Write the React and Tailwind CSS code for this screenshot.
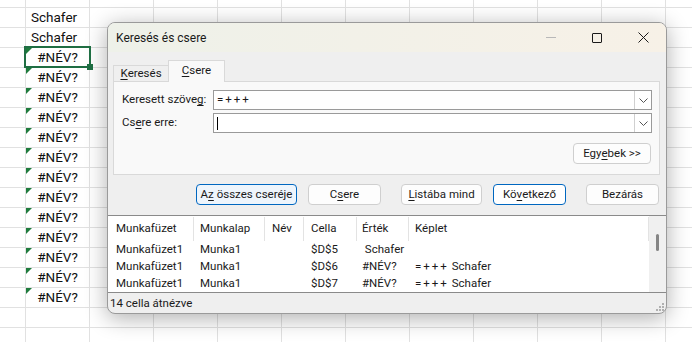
import React from "react";

const UI = { fontFamily: "Roboto, 'Noto Sans', sans-serif" };
const CELL = { fontFamily: "Roboto, 'Liberation Sans', sans-serif" };

function Chevron() {
  return (
    <svg width="9" height="5" viewBox="0 0 9 5" fill="none">
      <path d="M0.5 0.5 L4.5 4.5 L8.5 0.5" stroke="#555" strokeWidth="1" />
    </svg>
  );
}

function SheetRow({ h, children }) {
  return (
    <div className={`flex shrink-0 border-b border-[#e1e1e1] ${h}`}>
      <div className="w-[26px] shrink-0 border-r border-[#e1e1e1]" />
      <div className="relative w-[64px] shrink-0 border-r border-[#e1e1e1]">{children}</div>
      {Array.from({ length: 9 }).map((_, i) => (
        <div key={i} className="w-[64px] shrink-0 border-r border-[#e1e1e1]" />
      ))}
      <div className="flex-1" />
    </div>
  );
}

function ErrCell({ selected }) {
  return (
    <>
      <div className="absolute left-0 top-0 w-0 h-0 border-t-[6px] border-t-[#1e7b3c] border-r-[6px] border-r-transparent" />
      <div className="text-center text-[13.5px] leading-[19px] text-[#111]" style={CELL}>#NÉV?</div>
      {selected && (
        <>
          <div className="absolute -left-[2px] -top-[2px] w-[67px] h-[22px] border-2 border-[#1f6e43] z-10" />
          <div className="absolute left-[61px] top-[16px] w-[6px] h-[6px] bg-[#1f6e43] z-10" />
        </>
      )}
    </>
  );
}

function Btn({ w, children, variant }) {
  const base = "h-[21px] shrink-0 rounded-[4px] border flex items-center justify-center text-[11.5px] text-[#1a1a1a]";
  const v =
    variant === "focus"
      ? "border-[#0067c0] bg-[#eef5fc]"
      : variant === "default"
      ? "border-[#0067c0] bg-white"
      : "border-[#cfcfcf] bg-[#fdfdfd]";
  return <div className={`${base} ${v} ${w}`}>{children}</div>;
}

function U({ children }) {
  return <span className="underline underline-offset-[2px] decoration-1">{children}</span>;
}

function Plus() {
  return <span className="tracking-[2px]">=+++</span>;
}

export default function App() {
  const rows = [];
  rows.push(<SheetRow key="r0" h="h-[8px]" />);
  rows.push(
    <SheetRow key="r1" h="h-[20px]">
      <div className="pl-[5px] text-[13.5px] leading-[19px] text-[#111]" style={CELL}>Schafer</div>
    </SheetRow>
  );
  rows.push(
    <SheetRow key="r2" h="h-[20px]">
      <div className="pl-[5px] text-[13.5px] leading-[19px] text-[#111]" style={CELL}>Schafer</div>
    </SheetRow>
  );
  for (let i = 0; i < 13; i++) {
    rows.push(
      <SheetRow key={"e" + i} h="h-[20px]">
        <ErrCell selected={i === 0} />
      </SheetRow>
    );
  }
  rows.push(<SheetRow key="r16" h="h-[20px]" />);
  rows.push(<SheetRow key="r17" h="h-[20px]" />);

  const colW = ["w-[86px]", "w-[71px]", "w-[39px]", "w-[53px]", "w-[52px]", "w-[240px]"];
  const colPl = ["pl-[8px]", "pl-[6px]", "pl-[7px]", "pl-[7px]", "pl-[5px]", "pl-[6px]"];
  const headers = ["Munkafüzet", "Munkalap", "Név", "Cella", "Érték", "Képlet"];
  const formula = (
    <>
      <Plus /> Schafer
    </>
  );
  const data = [
    ["Munkafüzet1", "Munka1", "", "$D$5", "\u00a0Schafer", ""],
    ["Munkafüzet1", "Munka1", "", "$D$6", "#NÉV?", formula],
    ["Munkafüzet1", "Munka1", "", "$D$7", "#NÉV?", formula],
  ];

  return (
    <div className="relative w-[692px] h-[342px] overflow-hidden bg-white">
      <div className="flex flex-col">{rows}</div>

      {/* Dialog */}
      <div
        className="absolute left-[107px] top-[22px] w-[560px] h-[292px] rounded-[8px] border border-[#9a9a9a] bg-[#efefef] overflow-hidden flex flex-col shadow-[0_4px_22px_rgba(0,0,0,0.32)] text-[#1a1a1a]"
        style={UI}
      >
        {/* Title bar */}
        <div className="h-[29px] shrink-0 flex items-center bg-gradient-to-r from-[#eef1e9] to-[#f7f1e7]">
          <div className="pl-[8px] text-[12px] flex-1">Keresés és csere</div>
          <div className="w-[46px] h-full flex items-center justify-center">
            <div className="w-[10px] h-px bg-[#b8b8b8]" />
          </div>
          <div className="w-[46px] h-full flex items-center justify-center">
            <div className="w-[10px] h-[10px] border border-[#1a1a1a] rounded-[1px]" />
          </div>
          <div className="w-[46px] h-full flex items-center justify-center">
            <svg width="11" height="11" viewBox="0 0 11 11">
              <path d="M0.5 0.5 L10.5 10.5 M10.5 0.5 L0.5 10.5" stroke="#1a1a1a" strokeWidth="1" />
            </svg>
          </div>
        </div>

        {/* Tabs */}
        <div className="mt-[8px] ml-[5px] h-[21px] flex items-end shrink-0">
          <div className="w-[55px] h-[16px] border-t border-l border-[#d9d9d9] bg-[#efefef] flex items-center justify-center text-[11.5px]">
            <U>K</U>eresés
          </div>
          <div className="relative z-10 -mb-px w-[57px] h-[22px] border border-b-0 border-[#d9d9d9] bg-[#f9f9f9] flex items-center justify-center text-[11.5px] pb-[2px]">
            <U>C</U>sere
          </div>
        </div>

        {/* Panel */}
        <div className="ml-[5px] w-[547px] h-[94px] shrink-0 border border-[#d9d9d9] bg-[#f9f9f9] pt-[8px] flex flex-col text-[11.5px]">
          <div className="flex items-center h-[20px]">
            <div className="w-[99px] pl-[8px] shrink-0">
              Keresett szöve<U>g</U>:
            </div>
            <div className="w-[439px] h-[20px] border border-[#9a9a9a] bg-white flex items-center">
              <div className="flex-1 pl-[3px] text-[11.5px]">
                <Plus />
              </div>
              <div className="w-[17px] h-[18px] border-l border-[#d0d0d0] flex items-center justify-center bg-white">
                <Chevron />
              </div>
            </div>
          </div>
          <div className="flex items-center h-[20px] mt-[3px]">
            <div className="w-[99px] pl-[8px] shrink-0">
              Cs<U>e</U>re erre:
            </div>
            <div className="w-[439px] h-[20px] border border-[#9a9a9a] bg-white flex items-center">
              <div className="flex-1 pl-[3px] flex items-center">
                <div className="w-px h-[13px] bg-black" />
              </div>
              <div className="w-[17px] h-[18px] border-l border-[#d0d0d0] flex items-center justify-center bg-white">
                <Chevron />
              </div>
            </div>
          </div>
          <div className="flex justify-end mt-[10px] pr-[8px]">
            <Btn w="w-[78px]">
              Egy<U>e</U>bek &gt;&gt;
            </Btn>
          </div>
        </div>

        {/* Buttons */}
        <div className="flex mt-[9px] ml-[88px] shrink-0">
          <Btn w="w-[101px]" variant="focus">
            A<U>z</U>&nbsp;összes cseréje
          </Btn>
          <div className="w-[11px]" />
          <Btn w="w-[73px]">
            C<U>s</U>ere
          </Btn>
          <div className="w-[20px]" />
          <Btn w="w-[81px]">
            <U>L</U>istába mind
          </Btn>
          <div className="w-[11px]" />
          <Btn w="w-[73px]" variant="default">
            Kö<U>v</U>etkező
          </Btn>
          <div className="w-[20px]" />
          <Btn w="w-[73px]">Bezárás</Btn>
        </div>

        {/* Results list */}
        <div className="mt-[10px] h-[78px] shrink-0 border-y border-[#8a8a8a] bg-white flex text-[11.5px]">
          <div className="flex flex-col w-[541px]">
            <div className="flex h-[25px] shrink-0">
              {headers.map((hd, i) => (
                <div
                  key={i}
                  className={`${colW[i]} ${colPl[i]} shrink-0 h-[24px] mt-px border-r border-[#e3e3e3] flex items-center`}
                >
                  {hd}
                </div>
              ))}
            </div>
            {data.map((r, ri) => (
              <div key={ri} className="flex h-[17px] items-center shrink-0">
                {r.map((c, ci) => (
                  <div key={ci} className={`${colW[ci]} ${colPl[ci]} shrink-0 whitespace-pre`}>
                    {c}
                  </div>
                ))}
              </div>
            ))}
          </div>
          <div className="flex-1 bg-[#f0f0f0] pt-[18px] pl-[7px]">
            <div className="w-[3px] h-[17px] rounded-full bg-[#858585]" />
          </div>
        </div>

        {/* Status bar */}
        <div className="flex-1 relative flex items-center pl-[2px] pt-[2px] text-[11.5px]">
          14 cella átnézve
          <svg className="absolute right-[1px] bottom-[1px]" width="10" height="10" viewBox="0 0 10 10">
            <rect x="7" y="1" width="2" height="2" fill="#b0b0b0" />
            <rect x="4" y="4" width="2" height="2" fill="#b0b0b0" />
            <rect x="7" y="4" width="2" height="2" fill="#b0b0b0" />
            <rect x="1" y="7" width="2" height="2" fill="#b0b0b0" />
            <rect x="4" y="7" width="2" height="2" fill="#b0b0b0" />
            <rect x="7" y="7" width="2" height="2" fill="#b0b0b0" />
          </svg>
        </div>
      </div>
    </div>
  );
}
